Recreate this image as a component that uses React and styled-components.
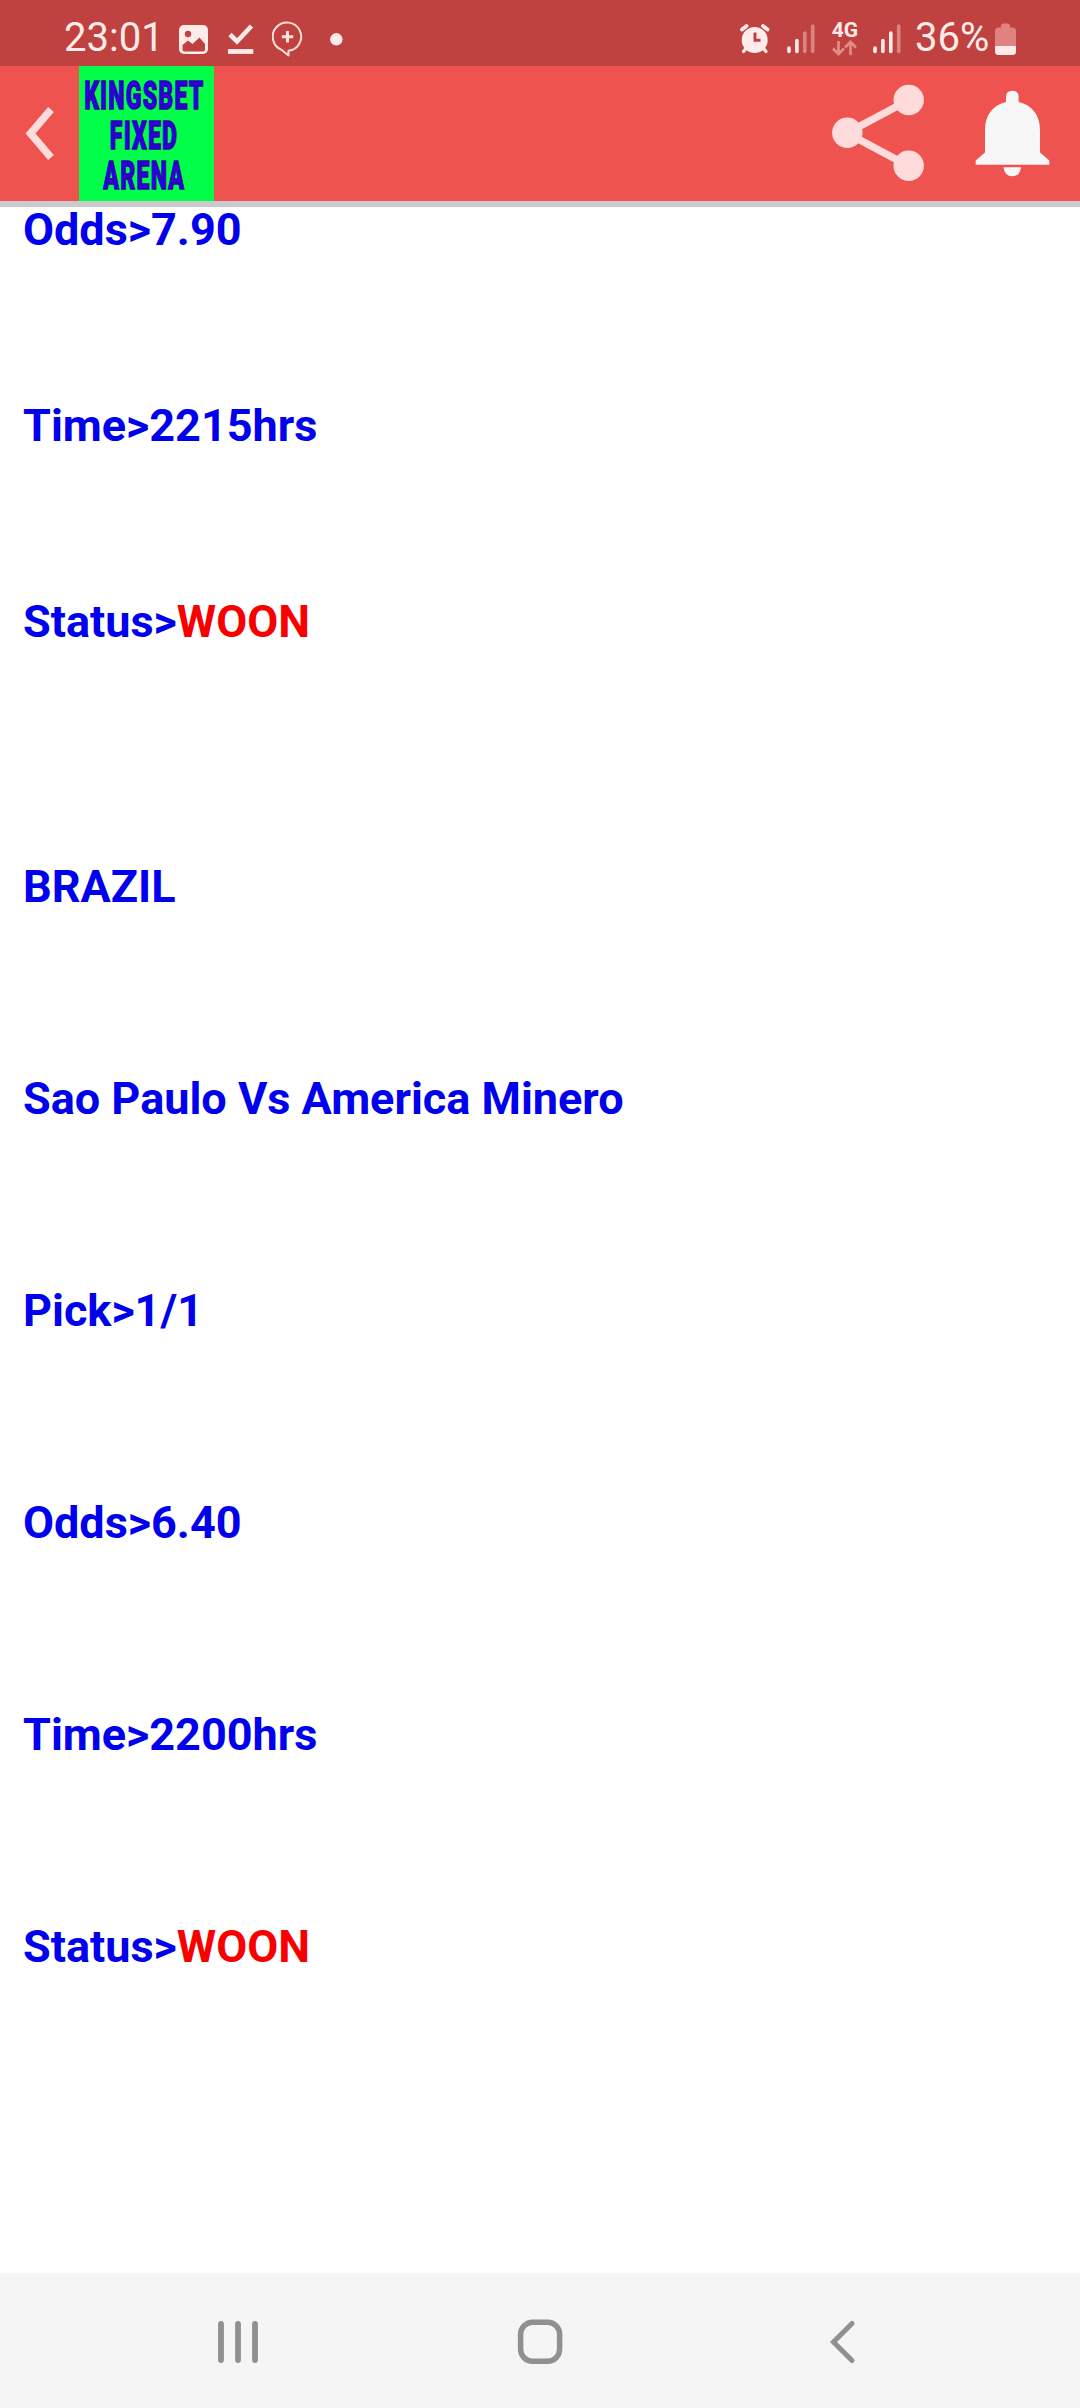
import React from "react";
import styled, { createGlobalStyle } from "styled-components";

const GlobalStyle = createGlobalStyle`
  html, body { margin: 0; padding: 0; background: #fff; }
  body { font-family: Roboto, "Liberation Sans", sans-serif; }
  svg { display: block; flex: none; }
`;

const Screen = styled.div`
  width: 1080px;
  height: 2408px;
  display: flex;
  flex-direction: column;
  overflow: hidden;
  background: #fff;
`;

const StatusBar = styled.header`
  height: 66px;
  flex: none;
  display: flex;
  justify-content: space-between;
  box-sizing: border-box;
  padding: 0 64px;
  background: #bf4240;
  color: #ffebe9;
`;

const StatusGroup = styled.div`
  display: flex;
`;

const StatusText = styled.span`
  width: ${(p) => p.$width}px;
  margin-left: ${(p) => p.$gap || 0}px;
  font-size: 40px;
  line-height: 76px;
  white-space: nowrap;
`;

const Slot = styled.span`
  margin-left: ${(p) => p.$gap || 0}px;
`;

const Network = styled.span`
  width: 26px;
  margin-left: 17px;
  display: flex;
  flex-direction: column;
  align-items: center;
`;

const NetworkLabel = styled.span`
  height: 39px;
  font-size: 21px;
  font-weight: 700;
  line-height: 60px;
`;

const AppBar = styled.div`
  height: 135px;
  flex: none;
  display: flex;
  border-bottom: 6px solid #cacaca;
  background: #ee534f;
`;

const BarButton = styled.button`
  border: 0;
  padding: 0;
  background: none;
  width: ${(p) => p.$width}px;
`;

const Logo = styled.div`
  width: 135px;
  height: 135px;
  box-sizing: border-box;
  padding: 10px 4px 0 0;
  display: flex;
  flex-direction: column;
  align-items: center;
  background: #00ff48;
`;

const LogoLine = styled.span`
  flex: none;
  font-size: 38.5px;
  font-weight: 900;
  line-height: 40px;
  letter-spacing: 2px;
  white-space: nowrap;
  color: #2a00e0;
  -webkit-text-stroke: 1.3px #2a06a8;
  transform: scaleX(0.6);
`;

const Spacer = styled.div`
  flex: 1;
`;

const Content = styled.main`
  flex: 1;
  padding: 1px 23px 0;
`;

const Line = styled.p`
  margin: 0 0 ${(p) => p.$after}px;
  font-size: 45px;
  font-weight: 700;
  line-height: 43px;
  white-space: nowrap;
  color: #0000ee;
`;

const Result = styled.span`
  color: #f80000;
`;

const NavBar = styled.nav`
  height: 135px;
  flex: none;
  display: flex;
  background: #f5f5f5;
`;

const NavButton = styled.button`
  border: 0;
  padding: 0;
  background: none;
  width: ${(p) => p.$width}px;
  display: flex;
  justify-content: flex-start;
`;

const lines = [
  { text: "Odds>7.90", after: 153 },
  { text: "Time>2215hrs", after: 153 },
  { text: "Status>", result: "WOON", after: 222 },
  { text: "BRAZIL", after: 169 },
  { text: "Sao Paulo Vs America Minero", after: 169 },
  { text: "Pick>1/1", after: 169 },
  { text: "Odds>6.40", after: 169 },
  { text: "Time>2200hrs", after: 169 },
  { text: "Status>", result: "WOON", after: 0 },
];

const PhotoIcon = () => (
  <svg width="29" height="66" viewBox="179 0 29 66">
    <rect x="179" y="25" width="29" height="29" rx="5" fill="#ffebe9" />
    <circle cx="188" cy="34" r="3.2" fill="#bf4240" />
    <path d="M182.5 45l5.5-4.5 4.5 3.5 7-6.500 5.500 6.500v5.500q0 2-2 2h-18.500q-2 0-2-2z" fill="#bf4240" />
  </svg>
);

const DoneIcon = () => (
  <svg width="26" height="66" viewBox="228 0 26 66" fill="none" stroke="#ffebe9">
    <path d="M230 34.500l7 7 14.500-15.500" strokeWidth="4.600" />
    <path d="M228 51.500h25.300" strokeWidth="4.800" />
  </svg>
);

const BubbleIcon = () => (
  <svg width="32" height="66" viewBox="272 0 32 66" fill="none" stroke="#ffe0d8">
    <path d="M281.500 49.800A14.200 14.200 0 1 1 288.500 50.800V55.500Z" strokeWidth="2" strokeLinejoin="round" />
    <path d="M287.500 31v11.500M281.800 36.700h11.500" strokeWidth="3" />
  </svg>
);

const Dot = () => (
  <svg width="13" height="66" viewBox="330 0 13 66">
    <circle cx="336.300" cy="39.300" r="6.200" fill="#ffebe9" />
  </svg>
);

const AlarmIcon = () => (
  <svg width="30" height="66" viewBox="741 0 30 66">
    <g stroke="#ffebe9" fill="none" strokeLinecap="round">
      <path d="M743 29.500l4.500-3.500M768.500 29.500l-4.500-3.500" strokeWidth="3.800" />
      <path d="M746.500 49l-2 2.500M765 49l2 2.500" strokeWidth="3.200" />
    </g>
    <circle cx="755.700" cy="40" r="13" fill="#ffebe9" />
    <path d="M756 32.500v7.700h5.500" fill="none" stroke="#bf4240" strokeWidth="3" />
  </svg>
);

const Signal = ({ level }) => (
  <svg width="28" height="66" viewBox="0 0 28 66" stroke="#ffebe9" strokeWidth="3.600" strokeLinecap="round">
    {[48, 40.500, 33, 26].map((top, i) => (
      <path key={top} d={`M${2 + i * 7.900} ${top}V51.500`} opacity={i < level ? 1 : 0.4} />
    ))}
  </svg>
);

const DataArrows = () => (
  <svg width="26" height="18" viewBox="832 39 26 18" fill="none" stroke="#e38b88" strokeWidth="2.700">
    <path d="M838.500 41v13M833 48.500l5.500 5.500 5.500-5.500M850.500 55V42M845 47.500l5.500-5.500 5.500 5.500" />
  </svg>
);

const Battery = () => (
  <svg width="21" height="66" viewBox="995 0 21 66">
    <path d="M1001 26q0-2.500 2-2.500h5q2 0 2 2.500v1.500h2.500q3.500 0 3.500 3.500v15h-21v-15q0-3.500 3.500-3.500h2.500z" fill="#e08380" />
    <path d="M995 46h21v5.500q0 3.500-3.500 3.500h-14q-3.500 0-3.500-3.500z" fill="#ffebe9" />
  </svg>
);

export default function App() {
  return (
    <>
      <GlobalStyle />
      <Screen>
        <StatusBar>
          <StatusGroup>
            <StatusText $width={98}>23:01</StatusText>
            <Slot $gap={17}><PhotoIcon /></Slot>
            <Slot $gap={20}><DoneIcon /></Slot>
            <Slot $gap={18}><BubbleIcon /></Slot>
            <Slot $gap={26}><Dot /></Slot>
          </StatusGroup>
          <StatusGroup>
            <Slot><AlarmIcon /></Slot>
            <Slot $gap={17}><Signal level={2} /></Slot>
            <Network>
              <NetworkLabel>4G</NetworkLabel>
              <DataArrows />
            </Network>
            <Slot $gap={15}><Signal level={3} /></Slot>
            <StatusText $gap={14} $width={80}>36%</StatusText>
            <Slot><Battery /></Slot>
          </StatusGroup>
        </StatusBar>

        <AppBar>
          <BarButton $width={79} aria-label="Back">
            <svg width="79" height="135" viewBox="0 66 79 135">
              <path d="M51 109.500L30.500 133.500 51 157.500" fill="none" stroke="#ffdcdb" strokeWidth="7.500" />
            </svg>
          </BarButton>
          <Logo>
            <LogoLine>KINGSBET</LogoLine>
            <LogoLine>FIXED</LogoLine>
            <LogoLine>ARENA</LogoLine>
          </Logo>
          <Spacer />
          <BarButton $width={134} aria-label="Share">
            <svg width="134" height="135" viewBox="820 66 134 135">
              <path d="M908.500 100.300L847 133l61.500 33" fill="none" stroke="#ffdcdb" strokeWidth="7.500" />
              <g fill="#ffdcdb">
                <circle cx="908.700" cy="100" r="15.200" />
                <circle cx="847.300" cy="132.700" r="15.200" />
                <circle cx="908.700" cy="165.700" r="15.200" />
              </g>
            </svg>
          </BarButton>
          <BarButton $width={126} aria-label="Notifications">
            <svg width="126" height="135" viewBox="954 66 126 135" fill="#f7f7f7">
              <path d="M1006 102V97q0-6.300 6.300-6.300t6.300 6.300v5C1032 105 1040 115 1040 130v22.500l9.300 8V164.700H975.700v-4.200l9.300-8V130C985 115 993 105 1006 102z" />
              <path d="M1003.500 167.300h17.500q-1 9-8.750 9t-8.750-9z" />
            </svg>
          </BarButton>
        </AppBar>

        <Content>
          {lines.map((l, i) => (
            <Line key={i} $after={l.after}>
              {l.text}
              {l.result && <Result>{l.result}</Result>}
            </Line>
          ))}
        </Content>

        <NavBar>
          <NavButton $width={440} aria-label="Recent apps">
            <svg width="440" height="135" viewBox="0 2273 440 135" stroke="#909090" strokeWidth="5.800" strokeLinecap="round">
              <path d="M221 2324v36M238 2324v36M255 2324v36" />
            </svg>
          </NavButton>
          <NavButton $width={200} aria-label="Home">
            <svg width="200" height="135" viewBox="440 2273 200 135" fill="none" stroke="#909090" strokeWidth="5.500">
              <rect x="520.600" y="2322.300" width="39" height="39" rx="12" />
            </svg>
          </NavButton>
          <NavButton $width={440} aria-label="Back">
            <svg width="440" height="135" viewBox="640 2273 440 135" fill="none" stroke="#909090" strokeWidth="5" strokeLinecap="round">
              <path d="M852 2323.500l-18.500 18.500 18.500 18.500" />
            </svg>
          </NavButton>
        </NavBar>
      </Screen>
    </>
  );
}
